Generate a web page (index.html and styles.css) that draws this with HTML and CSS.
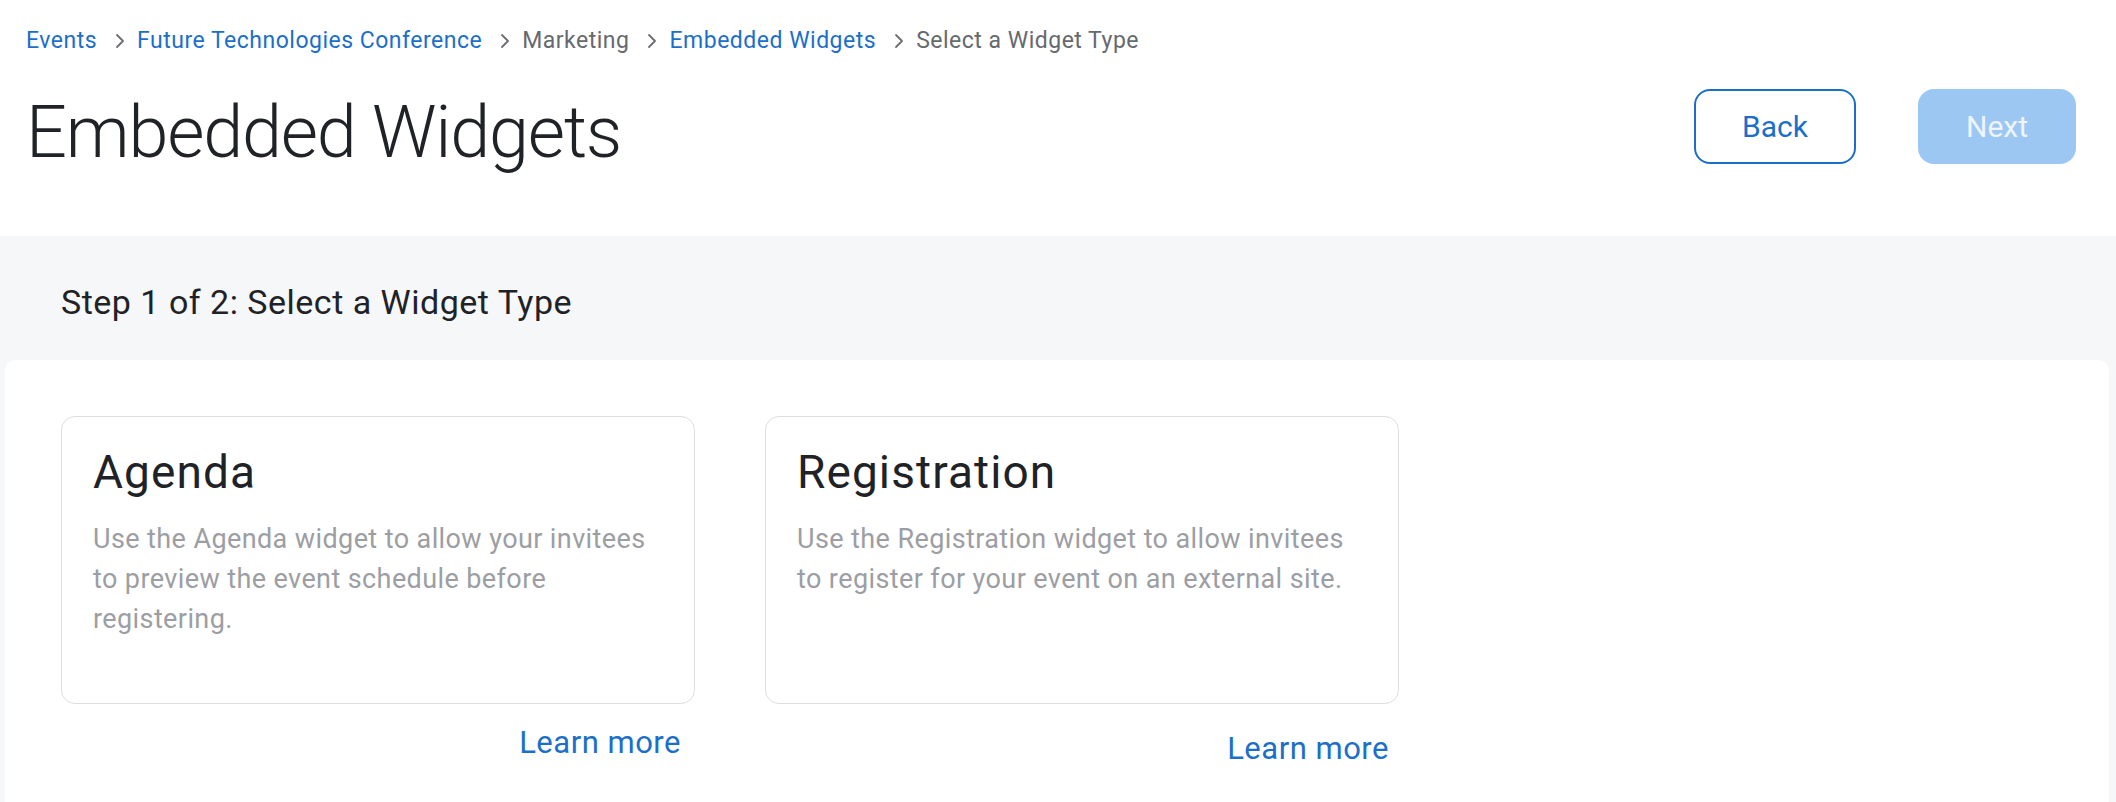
FILE: index.html
```html
<!DOCTYPE html>
<html lang="en">
<head>
<meta charset="utf-8">
<title>Embedded Widgets</title>
<link rel="stylesheet" href="styles.css">
</head>
<body>
<div class="page-head">
  <nav class="crumbs">
    <a class="crumb link" href="#">Events</a>
    <span class="sep"><svg viewBox="0 0 10 16" width="10" height="16"><path d="M2 2l6 6-6 6" fill="none" stroke="#6b6e73" stroke-width="1.8" stroke-linecap="round" stroke-linejoin="round"/></svg></span>
    <a class="crumb link" href="#">Future Technologies Conference</a>
    <span class="sep"><svg viewBox="0 0 10 16" width="10" height="16"><path d="M2 2l6 6-6 6" fill="none" stroke="#6b6e73" stroke-width="1.8" stroke-linecap="round" stroke-linejoin="round"/></svg></span>
    <span class="crumb">Marketing</span>
    <span class="sep"><svg viewBox="0 0 10 16" width="10" height="16"><path d="M2 2l6 6-6 6" fill="none" stroke="#6b6e73" stroke-width="1.8" stroke-linecap="round" stroke-linejoin="round"/></svg></span>
    <a class="crumb link" href="#">Embedded Widgets</a>
    <span class="sep"><svg viewBox="0 0 10 16" width="10" height="16"><path d="M2 2l6 6-6 6" fill="none" stroke="#6b6e73" stroke-width="1.8" stroke-linecap="round" stroke-linejoin="round"/></svg></span>
    <span class="crumb">Select a Widget Type</span>
  </nav>
  <div class="title-row">
    <h1 class="title">Embedded Widgets</h1>
    <div class="actions">
      <button class="btn btn-outline">Back</button>
      <button class="btn btn-disabled">Next</button>
    </div>
  </div>
</div>
<main class="content">
  <h2 class="step">Step 1 of 2: Select a Widget Type</h2>
  <section class="panel">
    <div class="widget">
      <div class="card">
        <h3 class="card-title">Agenda</h3>
        <p class="card-desc">Use the Agenda widget to allow your invitees to preview the event schedule before registering.</p>
      </div>
      <a class="learn" href="#">Learn more</a>
    </div>
    <div class="widget">
      <div class="card">
        <h3 class="card-title">Registration</h3>
        <p class="card-desc">Use the Registration widget to allow invitees to register for your event on an external site.</p>
      </div>
      <a class="learn learn-2" href="#">Learn more</a>
    </div>
  </section>
</main>
</body>
</html>
```

FILE: styles.css
```css
* { box-sizing: border-box; }
html, body { margin: 0; padding: 0; }
body {
  font-family: Roboto, "Liberation Sans", sans-serif;
  background: #ffffff;
  color: #1f2226;
  height: 802px;
  overflow: hidden;
}
.page-head {
  padding: 28px 40px 0 26px;
  height: 236px;
}
.crumbs {
  display: flex;
  align-items: center;
  height: 26px;
  font-size: 23px;
  letter-spacing: 0.5px;
  line-height: 26px;
  color: #66696e;
}
.crumb { white-space: nowrap; text-decoration: none; color: #66696e; }
.crumb.link { color: #1b6fca; }
.sep { display: flex; align-items: center; margin: 0 12px 0 18px; }
.title-row {
  display: flex;
  justify-content: space-between;
  align-items: center;
  margin-top: 35px;
  height: 75px;
}
.title {
  margin: 12px 0 0;
  font-size: 72px;
  font-weight: 300;
  line-height: 75px;
  color: #1f2226;
  letter-spacing: -1.2px;
}
.actions { display: flex; gap: 62px; }
.btn {
  width: 160px;
  height: 75px;
  border-radius: 16px;
  font-family: inherit;
  font-size: 30px;
  font-weight: 400;
}
.btn-outline {
  background: #fff;
  border: 2px solid #1b6fca;
  color: #1b6fca;
  width: 162px;
}
.btn-disabled {
  background: #9dc7f3;
  border: none;
  color: #eef5fd;
  width: 158px;
}
.content {
  background: #f6f7f9;
  padding: 0 7px 0 5px;
  height: 566px;
}
.step {
  margin: 0;
  height: 124px;
  padding: 8px 0 0 56px;
  display: flex;
  align-items: center;
  font-size: 34px;
  letter-spacing: 0.5px;
  font-weight: 400;
  color: #1f2226;
}
.panel {
  background: #ffffff;
  border-radius: 10px 10px 0 0;
  height: 442px;
  padding: 56px 56px 0;
  display: flex;
  gap: 70px;
  align-items: flex-start;
}
.widget { display: flex; flex-direction: column; width: 634px; }
.card {
  height: 288px;
  border: 1.5px solid #dcdee1;
  border-radius: 14px;
  padding: 29px 31px;
}
.card-title {
  margin: 0;
  font-size: 46px;
  letter-spacing: 1.1px;
  font-weight: 400;
  line-height: 52px;
  color: #1f2226;
}
.card-desc {
  margin: 21px 0 0;
  font-size: 27px;
  letter-spacing: 0.4px;
  line-height: 40px;
  color: #9c9ea3;
}
.learn {
  align-self: flex-end;
  margin: 22px 14px 0 0;
  font-size: 31px;
  letter-spacing: 0.5px;
  line-height: 34px;
  color: #1b6fca;
  text-decoration: none;
}
.learn-2 { margin-top: 28px; margin-right: 10px; }
```
